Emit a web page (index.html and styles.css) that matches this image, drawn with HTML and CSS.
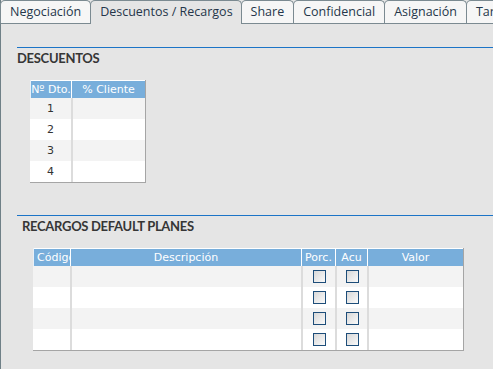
FILE: index.html
```html
<!DOCTYPE html>
<html lang="es">
<head>
    <meta charset="UTF-8">
    <meta name="viewport" content="width=device-width, initial-scale=1.0">
    <title>Descuentos / Recargos</title>
    <link rel="stylesheet" href="styles.css">
</head>
<body>
    <div class="tabs">
        <div class="tab">Negociación</div>
        <div class="tab active">Descuentos / Recargos</div>
        <div class="tab">Share</div>
        <div class="tab">Confidencial</div>
        <div class="tab">Asignación</div>
        <div class="tab">Tarifas</div>
    </div>
    <div class="panel">
        <div class="section">
            <h3>DESCUENTOS</h3>
            <table class="grid grid-dto">
                <colgroup>
                    <col style="width:41px">
                    <col style="width:74px">
                </colgroup>
                <thead>
                    <tr><th>Nº Dto.</th><th>% Cliente</th></tr>
                </thead>
                <tbody>
                    <tr><td>1</td><td></td></tr>
                    <tr><td>2</td><td></td></tr>
                    <tr><td>3</td><td></td></tr>
                    <tr><td>4</td><td></td></tr>
                </tbody>
            </table>
        </div>
        <div class="section section-rec">
            <h3>RECARGOS DEFAULT PLANES</h3>
            <table class="grid grid-rec">
                <colgroup>
                    <col style="width:37px">
                    <col style="width:231px">
                    <col style="width:34px">
                    <col style="width:32px">
                    <col style="width:96px">
                </colgroup>
                <thead>
                    <tr><th><div class="clip">Código</div></th><th>Descripción</th><th>Porc.</th><th>Acu</th><th>Valor</th></tr>
                </thead>
                <tbody>
                    <tr><td></td><td></td><td><span class="check"></span></td><td><span class="check"></span></td><td></td></tr>
                    <tr><td></td><td></td><td><span class="check"></span></td><td><span class="check"></span></td><td></td></tr>
                    <tr><td></td><td></td><td><span class="check"></span></td><td><span class="check"></span></td><td></td></tr>
                    <tr><td></td><td></td><td><span class="check"></span></td><td><span class="check"></span></td><td></td></tr>
                </tbody>
            </table>
        </div>
    </div>
</body>
</html>
```

FILE: styles.css
```css
html, body {
    margin: 0;
    padding: 0;
    height: 100%;
    overflow: hidden;
}
body {
    background-color: #e5e5e5;
    font-family: "Open Sans", sans-serif;
    color: #2b3a4c;
}
.tabs {
    display: flex;
    height: 23px;
    border-bottom: 1px solid #7b8a91;
    border-left: 1px solid #6f8087;
    white-space: nowrap;
}
.tab {
    flex: none;
    height: 22px;
    line-height: 22px;
    padding: 0 9px;
    margin-left: -1px;
    font-size: 12.5px;
    color: #25364a;
    background-color: #f6f6f6;
    border: 1px solid #7b8a91;
    border-bottom: none;
    border-radius: 5px 5px 0 0;
}
.tab.active {
    background-color: #e5e5e5;
    height: 23px;
    margin-bottom: -1px;
    padding: 0 8px 0 9px;
}
.panel {
    box-sizing: border-box;
    height: calc(100% - 24px);
    border-left: 1px solid #6f8087;
    padding-top: 23px;
}
.section {
    margin-left: 16px;
    border-top: 1px solid #1c74c7;
}
.section h3 {
    margin: 0;
    padding-top: 2px;
    font-family: Lato, sans-serif;
    font-size: 13px;
    font-weight: bold;
    letter-spacing: -0.3px;
    line-height: 17px;
    color: #363636;
}
.section-rec {
    margin-top: 32px;
}
.section-rec h3 {
    padding-left: 5px;
}
.grid {
    border-collapse: separate;
    border-spacing: 0;
    table-layout: fixed;
    border-right: 1px solid #a5a5a5;
    border-bottom: 1px solid #a5a5a5;
    font-family: "DejaVu Sans", Verdana, sans-serif;
    font-size: 11px;
}
.grid-dto {
    margin: 13px 0 0 13px;
    width: 115px;
}
.grid-rec {
    margin: 13px 0 0 16px;
    width: 430px;
}
.grid th {
    height: 18px;
    padding: 0;
    background-color: #78aedb;
    color: #fff;
    font-weight: normal;
    box-shadow: inset 0 1px 0 #fff;
    border-left: 1px solid #fff;
    text-align: center;
    white-space: nowrap;
    overflow: hidden;
}
.grid th:first-child {
    border-left: 1px solid #e8f0f8;
}
.clip {
    overflow: hidden;
    text-align: left;
    padding-left: 3px;
}
.grid td {
    height: 21px;
    padding: 0;
    text-align: center;
    color: #333;
    border-left: 2px solid #dcdcdc;
    vertical-align: middle;
}
.grid td:first-child {
    border-left: none;
}
.grid tbody tr:nth-child(odd) td {
    background-color: #f3f3f3;
}
.grid tbody tr:nth-child(even) td {
    background-color: #fff;
}
.check {
    display: inline-block;
    width: 11px;
    height: 11px;
    border: 1px solid #1d4d79;
    background: linear-gradient(135deg, #d8d8d8, #fafafa);
    vertical-align: middle;
}
```
